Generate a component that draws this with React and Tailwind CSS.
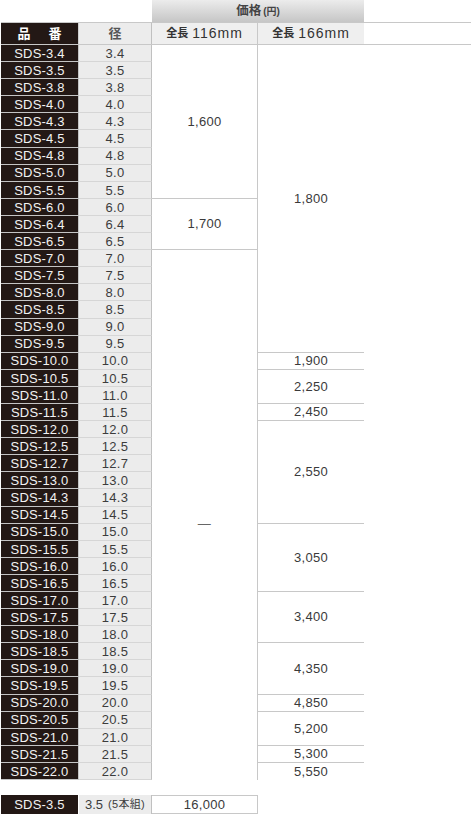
import React from 'react';

const sizes = [
  '3.4', '3.5', '3.8', '4.0', '4.3', '4.5', '4.8', '5.0', '5.5', '6.0', '6.4', '6.5',
  '7.0', '7.5', '8.0', '8.5', '9.0', '9.5', '10.0', '10.5', '11.0', '11.5', '12.0',
  '12.5', '12.7', '13.0', '14.3', '14.5', '15.0', '15.5', '16.0', '16.5', '17.0',
  '17.5', '18.0', '18.5', '19.0', '19.5', '20.0', '20.5', '21.0', '21.5', '22.0',
];

// 全長116mm
const short = [
  { price: '1,600', span: 'row-span-9', extra: 'border-b border-[#c8c8c8]' },
  { price: '1,700', span: 'row-span-3', extra: 'border-b border-[#c8c8c8]' },
  { price: '—', span: 'row-span-31', extra: 'pt-[18px] text-[#666]' },
];

// 全長166mm
const long = [
  { price: '1,800', span: 'row-span-18', extra: 'border-b border-[#c8c8c8]' },
  { price: '1,900', span: 'row-span-1', extra: 'border-b border-[#c8c8c8]' },
  { price: '2,250', span: 'row-span-2', extra: 'border-b border-[#c8c8c8]' },
  { price: '2,450', span: 'row-span-1', extra: 'border-b border-[#c8c8c8]' },
  { price: '2,550', span: 'row-span-6', extra: 'border-b border-[#c8c8c8]' },
  { price: '3,050', span: 'row-span-4', extra: 'border-b border-[#c8c8c8]' },
  { price: '3,400', span: 'row-span-3', extra: 'border-b border-[#c8c8c8]' },
  { price: '4,350', span: 'row-span-3', extra: 'border-b border-[#c8c8c8]' },
  { price: '4,850', span: 'row-span-1', extra: 'border-b border-[#c8c8c8]' },
  { price: '5,200', span: 'row-span-2', extra: 'border-b border-[#c8c8c8]' },
  { price: '5,300', span: 'row-span-1', extra: 'border-b border-[#c8c8c8]' },
  { price: '5,550', span: 'row-span-1', extra: '' },
];

const PriceColumn = ({ groups, border }) => (
  <div className={`grid grid-rows-[repeat(43,17.1px)] w-[106px] ${border ? 'border-r border-[#c8c8c8]' : ''}`}>
    {groups.map((g) => (
      <div
        key={g.price}
        className={`${g.span} flex items-center justify-center text-[13px] text-[#3a3a3a] tracking-[0.3px] ${g.extra}`}
      >
        {g.price}
      </div>
    ))}
  </div>
);

const App = () => {
  return (
    <div className="w-[471px] h-[815px] bg-white pl-px font-['Liberation_Sans','Noto_Sans_CJK_JP',sans-serif]">
      {/* 価格 header */}
      <div className="flex">
        <div className="w-[151px]" />
        <div className="w-[212px] h-[22px] bg-linear-to-b from-[#ececec] to-[#c6c6c6] flex items-center justify-center text-[#444]">
          <span className="text-[12.5px] font-bold">価格</span>
          <span className="ml-[2px] text-[10px] font-bold">(円)</span>
        </div>
      </div>

      {/* column headings */}
      <div className="flex h-[23px] border-t border-b border-[#c8c8c8]">
        <div className="w-[78px] bg-[#231815] border-r border-[#cfcfcf] flex items-center justify-center gap-[18px] text-white text-[13px] font-bold">
          <span>品</span>
          <span>番</span>
        </div>
        <div className="w-[73px] bg-[#ececec] border-r border-[#c0c0c0] flex items-center justify-center text-[13px] font-bold text-[#555]">
          径
        </div>
        <div className="w-[106px] bg-[#efefef] border-r border-[#c8c8c8] flex items-center justify-center gap-[4px] text-[#333]">
          <span className="text-[11px] font-bold">全長</span>
          <span className="text-[14px] tracking-[1px]">116mm</span>
        </div>
        <div className="w-[106px] bg-[#efefef] flex items-center justify-center gap-[4px] text-[#333]">
          <span className="text-[11px] font-bold">全長</span>
          <span className="text-[14px] tracking-[1px]">166mm</span>
        </div>
      </div>

      {/* body */}
      <div className="flex">
        <div className="flex flex-col">
          {sizes.map((s) => (
            <div key={s} className="flex h-[17.1px] text-[13px]">
              <div className="w-[78px] bg-[#231815] border-b border-r border-[#c4c4c4] flex items-center justify-center pt-px text-[#f2f2f2] tracking-[0.2px]">
                SDS-{s}
              </div>
              <div className="w-[73px] bg-[#ececec] border-b border-[#d6d6d6] border-r border-r-[#c0c0c0] flex items-center justify-center pt-px text-[#3c3c3c] tracking-[0.3px]">
                {s}
              </div>
            </div>
          ))}
        </div>
        <PriceColumn groups={short} border />
        <PriceColumn groups={long} />
      </div>

      {/* 5本組 set */}
      <div className="flex h-[19px] mt-[15px] text-[13px]">
        <div className="w-[77px] mr-px bg-[#231815] flex items-center justify-center text-[#f2f2f2] tracking-[0.2px]">
          SDS-3.5
        </div>
        <div className="w-[73px] bg-[#ececec] border-r border-[#c0c0c0] flex items-center justify-center text-[#3c3c3c]">
          3.5
          <span className="ml-[5px] text-[11px] tracking-[0.3px]">(5本組)</span>
        </div>
        <div className="w-[106px] border-t border-b border-r border-[#c8c8c8] flex items-center justify-center text-[#3a3a3a] tracking-[0.3px]">
          16,000
        </div>
      </div>
    </div>
  );
};

export default App;
